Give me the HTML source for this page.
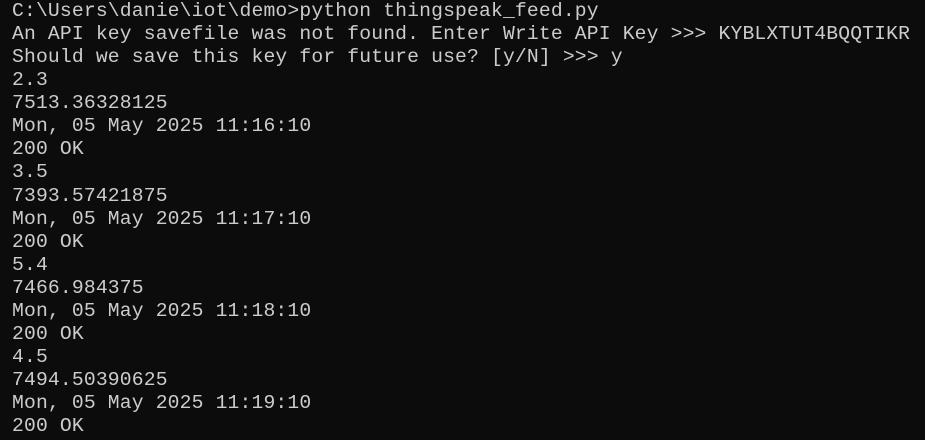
<!DOCTYPE html>
<html><head><style>
html,body{margin:0;padding:0;background:#0c0c0c;width:925px;height:440px;overflow:hidden}
pre{margin:0;padding:0 0 0 12px;font-family:"Liberation Mono",monospace;font-size:19.7px;letter-spacing:0.16px;line-height:23.06px;color:#cccccc;white-space:pre}
</style></head><body><pre>C:\Users\danie\iot\demo>python thingspeak_feed.py
An API key savefile was not found. Enter Write API Key >>> KYBLXTUT4BQQTIKR
Should we save this key for future use? [y/N] >>> y
2.3
7513.36328125
Mon, 05 May 2025 11:16:10
200 OK
3.5
7393.57421875
Mon, 05 May 2025 11:17:10
200 OK
5.4
7466.984375
Mon, 05 May 2025 11:18:10
200 OK
4.5
7494.50390625
Mon, 05 May 2025 11:19:10
200 OK</pre></body></html>
